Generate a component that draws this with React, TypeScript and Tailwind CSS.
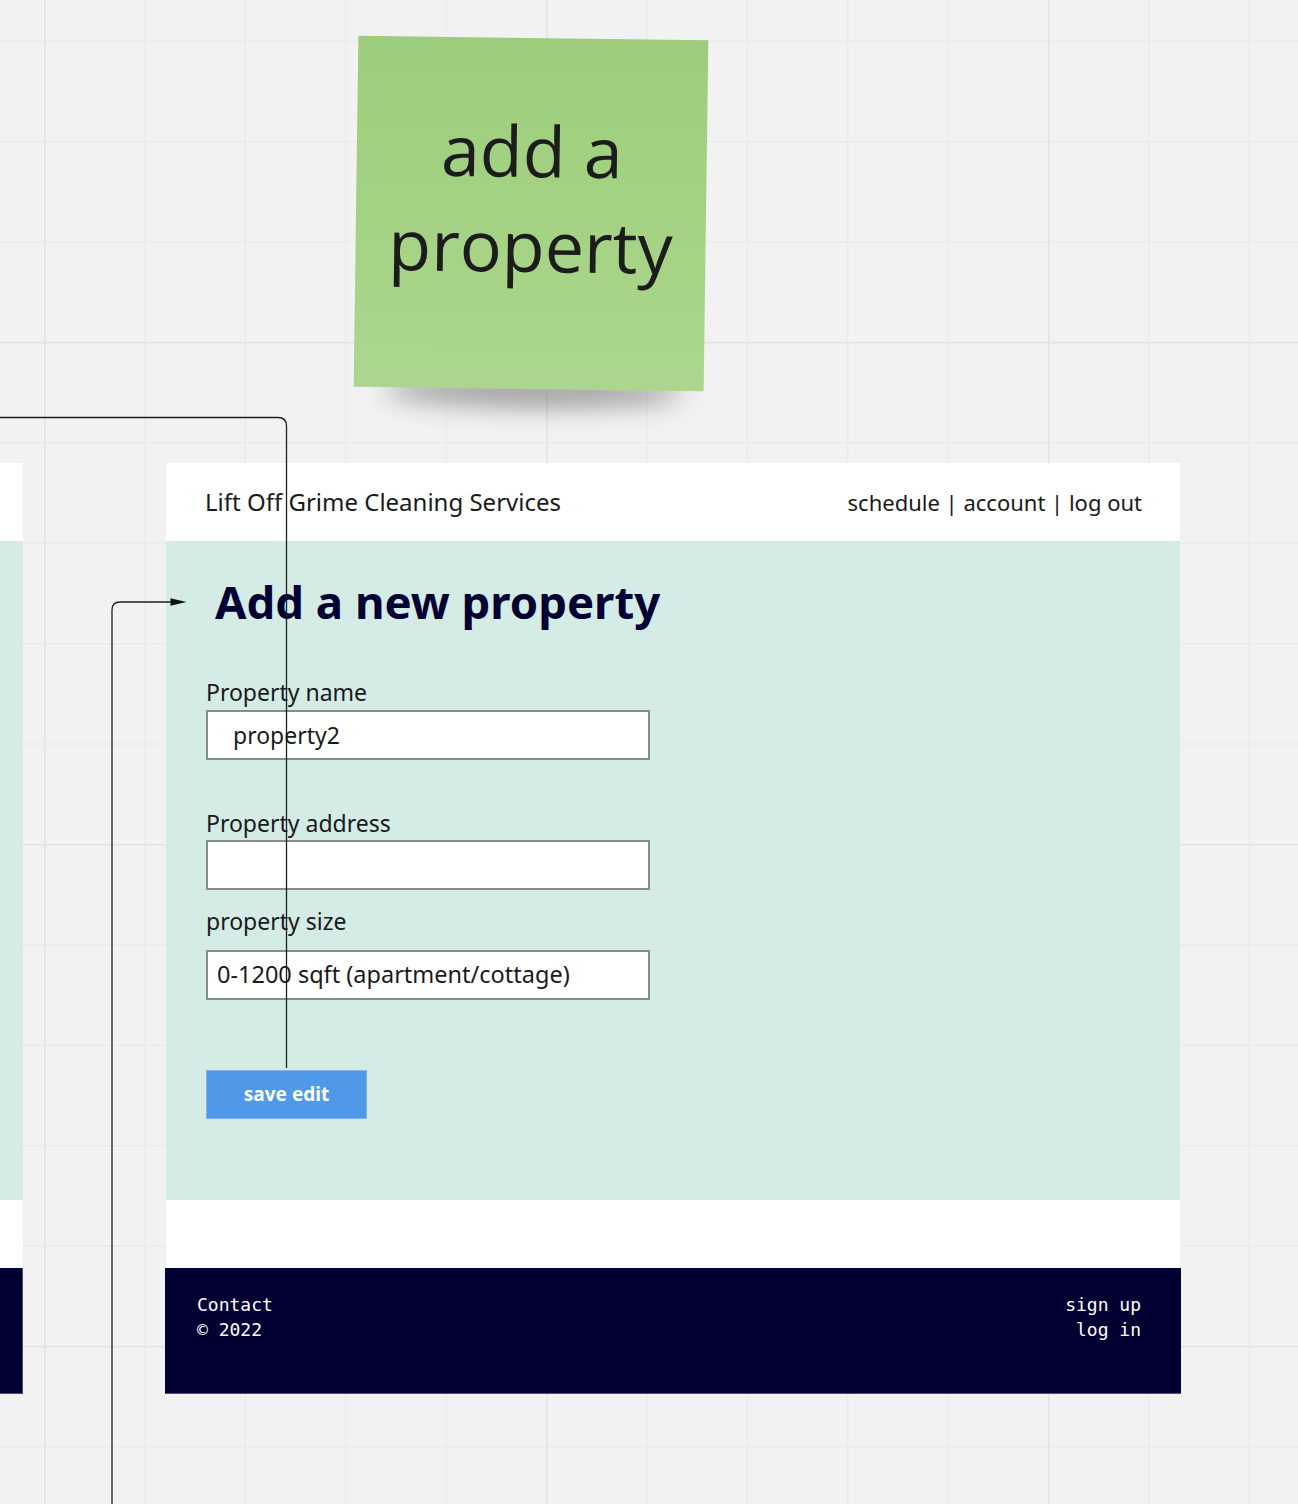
import React from "react";

function Grid() {
  return (
    <svg className="absolute inset-0 pointer-events-none" width="1298" height="1504">
      <defs>
        <pattern id="minor" x="44" y="40.7" width="100.4" height="100.4" patternUnits="userSpaceOnUse">
          <path d="M0.5 0 V100.4 M0 0.5 H100.4" stroke="#e8e8e8" strokeWidth="1" fill="none" />
        </pattern>
        <pattern id="major" x="44" y="342" width="502" height="502" patternUnits="userSpaceOnUse">
          <path d="M0.75 0 V502 M0 0.75 H502" stroke="#e2e2e2" strokeWidth="1.5" fill="none" />
        </pattern>
      </defs>
      <rect width="1298" height="1504" fill="url(#minor)" />
      <rect width="1298" height="1504" fill="url(#major)" />
    </svg>
  );
}

function Connectors() {
  return (
    <svg className="absolute inset-0 pointer-events-none" width="1298" height="1504">
      <path d="M0 417.5 H278 Q286.5 417.5 286.5 426 V1068" stroke="#1e1e1e" strokeWidth="1.3" fill="none" />
      <path d="M112 1504 V610 Q112 602 120 602 H176" stroke="#1e1e1e" strokeWidth="1.3" fill="none" />
      <path d="M170.5 598.3 L186.5 602 L170.5 605.7 Z" fill="#111" />
    </svg>
  );
}

function Sticky() {
  return (
    <div className="absolute left-[356px] top-[38px] w-[350px] h-[351px] rotate-[0.77deg]">
      <div className="absolute left-[30px] right-[20px] bottom-[-18px] h-[32px] rounded-[50%] bg-black/35 blur-[13px]" />
      <div className="absolute inset-0 bg-gradient-to-b from-[#9dcd7c] via-[#a4d283] to-[#acd68f] flex flex-col items-center justify-center pb-[32px]">
        <div
          className="text-[70px] leading-[95px] text-[#1c1c1c] text-center"
          style={{ fontFamily: '"Open Sans", sans-serif' }}
        >
          <div>add a</div>
          <div>property</div>
        </div>
      </div>
    </div>
  );
}

function LeftFrame() {
  return (
    <div className="absolute left-0 top-[463px] w-[23px] flex flex-col">
      <div className="h-[78px] bg-white" />
      <div className="h-[659px] bg-[#d4ebe6]" />
      <div className="h-[68px] bg-white" />
      <div className="h-[126px] bg-[#020033] border-r border-b border-[#4b4b78]" />
    </div>
  );
}

const sans = { fontFamily: '"Noto Sans", "Open Sans", sans-serif' };
const mono = { fontFamily: '"DejaVu Sans Mono", "Liberation Mono", monospace' };

function MainFrame() {
  return (
    <div className="absolute left-[166px] top-[463px] w-[1014px] flex flex-col" style={sans}>
      <div className="h-[78px] bg-white flex items-center justify-between pl-[39px] pr-[38px] text-[#1a1a1a]">
        <div className="text-[24px]">Lift Off Grime Cleaning Services</div>
        <div className="text-[22px]">schedule | account | log out</div>
      </div>
      <div className="h-[659px] bg-[#d4ebe6] flex flex-col pl-[40px]">
        <h1 className="mt-[28px] ml-[9px] text-[45.5px] leading-[64px] font-bold text-[#020033]">
          Add a new property
        </h1>
        <label className="mt-[44px] text-[23px] leading-[30px] text-[#1a1a1a]">Property name</label>
        <div className="mt-[3px] w-[444px] h-[50px] bg-white border-2 border-[#8a8a8a] flex items-center pl-[25px] text-[23px] text-[#1a1a1a]">
          property2
        </div>
        <label className="mt-[48px] text-[23px] leading-[30px] text-[#1a1a1a]">Property address</label>
        <div className="mt-[2px] w-[444px] h-[50px] bg-white border-2 border-[#8a8a8a]" />
        <label className="mt-[16px] text-[23px] leading-[30px] text-[#1a1a1a]">property size</label>
        <div className="mt-[14px] w-[444px] h-[50px] bg-white border-2 border-[#8a8a8a] flex items-center pl-[9px] text-[23.5px] text-[#1a1a1a]">
          0-1200 sqft (apartment/cottage)
        </div>
        <button className="mt-[70px] w-[161px] h-[49px] bg-[#5099e9] border border-[#7db3ef] text-white font-bold text-[19px] flex items-center justify-center">
          save edit
        </button>
      </div>
      <div className="h-[68px] bg-white" />
      <div
        className="-mx-px h-[126px] bg-[#020033] border-b border-[#50507e] flex justify-between pl-[32px] pr-[40px] pt-[24px] text-white text-[18px] leading-[25px]"
        style={mono}
      >
        <div>
          <div>Contact</div>
          <div>© 2022</div>
        </div>
        <div className="text-right">
          <div>sign up</div>
          <div>log in</div>
        </div>
      </div>
    </div>
  );
}

export default function App() {
  return (
    <div className="relative w-[1298px] h-[1504px] bg-[#f2f2f2] overflow-hidden">
      <Grid />
      <Sticky />
      <LeftFrame />
      <MainFrame />
      <Connectors />
    </div>
  );
}
